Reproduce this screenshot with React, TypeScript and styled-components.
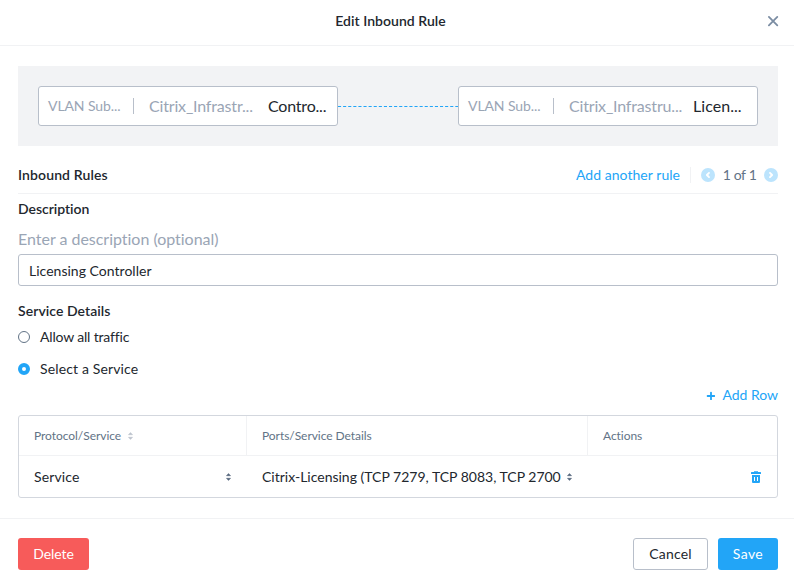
import React from "react";
import styled, { createGlobalStyle } from "styled-components";

const GlobalStyle = createGlobalStyle`
  *, *::before, *::after { box-sizing: border-box; }
  body {
    margin: 0;
    background: #fff;
    font-family: Lato, "Open Sans", sans-serif;
    font-size: 14px;
    color: #22272e;
  }
`;

const Modal = styled.div`
  height: 587px;
  display: flex;
  flex-direction: column;
  background: #fff;
  overflow: hidden;
`;

const Header = styled.header`
  height: 46px;
  flex: none;
  padding: 0 15px 3px 18px;
  display: grid;
  grid-template-columns: 1fr auto 1fr;
  align-items: center;
  border-bottom: 1px solid #f1f2f4;
`;

const Title = styled.h1`
  grid-column: 2;
  margin: 0 6px 0 -10px;
  font-size: 14px;
  line-height: 20px;
  font-weight: 600;
  letter-spacing: 0.04px;
`;

const IconButton = styled.button`
  display: flex;
  padding: 0;
  border: 0;
  background: none;
`;

const CloseButton = styled(IconButton)`
  grid-column: 3;
  justify-self: end;
`;

const Body = styled.main`
  flex: 1;
  padding: 20px 16px 0 18px;
`;

const Diagram = styled.section`
  height: 80px;
  padding: 0 20px;
  display: flex;
  align-items: center;
  background: #f2f3f5;
`;

const Connector = styled.svg`
  flex: 1;
  min-width: 0;
  height: 2px;
  display: block;
`;

const Node = styled.div`
  width: 300px;
  height: 40px;
  flex: none;
  display: flex;
  align-items: center;
  padding: 0 9px;
  background: #fff;
  border: 1px solid #b8bfca;
  border-radius: 3px;
  white-space: nowrap;
`;

const NodeKind = styled.span`
  width: 85px;
  font-size: 14px;
  letter-spacing: -0.1px;
  line-height: 18px;
  color: #9aa5b5;
`;

const NodeRule = styled.span`
  width: 1px;
  height: 16px;
  background: #b8bfca;
`;

const NodeCategory = styled.span<{ $width: number }>`
  width: ${(p) => p.$width}px;
  margin-left: 15px;
  padding-bottom: 1px;
  font-size: 16px;
  line-height: 22px;
  letter-spacing: -0.17px;
  color: #9aa5b5;
`;

const NodeName = styled.span<{ $tracking: number }>`
  padding-bottom: 1px;
  font-size: 16px;
  line-height: 22px;
  letter-spacing: ${(p) => p.$tracking}px;
`;

const RulesBar = styled.div`
  height: 48px;
  padding-top: 11px;
  display: flex;
  align-items: center;
  border-bottom: 1px solid #f1f2f4;
`;

const Heading = styled.h2`
  margin: 0;
  font-size: 14px;
  line-height: 20px;
  font-weight: 600;
  letter-spacing: 0.12px;
`;

const Pager = styled.div`
  margin-left: auto;
  display: flex;
  align-items: center;
`;

const TextLink = styled.a<{ $tracking?: number }>`
  color: #22a5f7;
  line-height: 20px;
  letter-spacing: ${(p) => p.$tracking ?? 0}px;
`;

const PagerRule = styled.span`
  width: 1px;
  height: 16px;
  margin: 0 10px;
  background: #f1f2f4;
`;

const PagerCount = styled.span`
  width: 49px;
  text-align: center;
  line-height: 20px;
  letter-spacing: -0.5px;
  word-spacing: 0.4px;
  color: #627386;
`;

const SectionTitle = styled(Heading)<{ $top: number; $tracking?: number }>`
  margin-top: ${(p) => p.$top}px;
  letter-spacing: ${(p) => p.$tracking ?? 0}px;
`;

const FieldLabel = styled.label`
  display: block;
  margin-top: 9px;
  height: 26px;
  font-size: 16px;
  line-height: 22px;
  letter-spacing: -0.02px;
  color: #9aa5b5;
`;

const TextField = styled.input`
  display: block;
  width: 100%;
  height: 32px;
  padding: 0 10px;
  border: 1px solid #b8bfca;
  border-radius: 3px;
  font: inherit;
  letter-spacing: 0.02px;
  color: inherit;
  outline: 0;
`;

const RadioRow = styled.div<{ $top: number }>`
  margin-top: ${(p) => p.$top}px;
  height: 20px;
  display: flex;
  align-items: center;
  gap: 10px;
`;

const Radio = styled.span<{ $on?: boolean }>`
  width: 12px;
  height: 12px;
  border-radius: 50%;
  background: #fff;
  border: ${(p) => (p.$on ? "4px solid #22a5f7" : "1px solid #627386")};
`;

const RadioLabel = styled.span<{ $tracking: number }>`
  padding-bottom: 1px;
  line-height: 18px;
  letter-spacing: ${(p) => p.$tracking}px;
`;

const AddRow = styled.div`
  margin-top: 6px;
  height: 20px;
  display: flex;
  align-items: center;
  justify-content: flex-end;
  gap: 8px;
`;

const Table = styled.div`
  margin-top: 10px;
  height: 83px;
  border: 1px solid #d3d7de;
  border-radius: 3px;
`;

const TableRow = styled.div<{ $head?: boolean }>`
  height: ${(p) => (p.$head ? 40 : 41)}px;
  display: grid;
  grid-template-columns: 228px 341px 1fr;
  font-size: ${(p) => (p.$head ? 12 : 14)}px;
  letter-spacing: ${(p) => (p.$head ? -0.05 : 0)}px;
  color: ${(p) => (p.$head ? "#627386" : "inherit")};
  border-bottom: ${(p) => (p.$head ? "1px solid #f1f2f4" : "0")};
`;

const HeadCell = styled.div`
  display: flex;
  align-items: center;
  gap: 7px;
  padding: 0 15px;

  & + & {
    border-left: 1px solid #f1f2f4;
    margin-left: -1px;
  }
`;

const Cell = styled.div`
  display: flex;
  align-items: center;
  justify-content: space-between;
  padding: 0 16px 0 15px;
  white-space: nowrap;
`;

const Actions = styled(Cell)`
  justify-content: flex-end;
  padding-top: 1px;
`;

const ServiceName = styled.span`
  letter-spacing: 0.15px;
`;

const Footer = styled.footer`
  height: 69px;
  flex: none;
  padding: 19px 16px 0 18px;
  display: flex;
  align-items: flex-start;
  gap: 10px;
  border-top: 1px solid #f1f2f4;
`;

const Button = styled.button<{ $tone: "danger" | "plain" | "primary"; $width: number; $tracking: number }>`
  width: ${(p) => p.$width}px;
  height: 32px;
  padding: 0 0 1px;
  border-radius: 3px;
  border: ${(p) => (p.$tone === "plain" ? "1px solid #b8bfca" : "0")};
  background: ${(p) => ({ danger: "#f75b5a", plain: "#fff", primary: "#22a5f7" })[p.$tone]};
  color: ${(p) => (p.$tone === "plain" ? "#22272e" : "#fff")};
  font: inherit;
  letter-spacing: ${(p) => p.$tracking}px;
`;

const Spacer = styled.span`
  flex: 1;
`;

function CloseIcon() {
  return (
    <svg width="12" height="12" viewBox="0 0 12 12" fill="none" stroke="#7b8da3" strokeWidth="1.8" strokeLinecap="round">
      <path d="M1.9 1.9l8.4 8.4M10.3 1.9L1.9 10.3" />
    </svg>
  );
}

function PagerIcon({ next }: { next?: boolean }) {
  return (
    <svg width="14" height="14" viewBox="0 0 14 14" fill="none">
      <circle cx="7" cy="7" r="7" fill="#bce4fd" />
      <path d={next ? "M6 4.9L8.1 7L6 9.1" : "M8 4.9L5.9 7L8 9.1"} stroke="#fff" strokeWidth="1.9" strokeLinecap="round" strokeLinejoin="round" />
    </svg>
  );
}

function SortIcon({ color }: { color: string }) {
  return (
    <svg width="5" height="8" viewBox="0 0 5 8" fill={color} stroke={color} strokeWidth="0.6" strokeLinejoin="round">
      <path d="M2.5 0.6L4.5 2.7H0.5zM2.5 7.4L4.5 5.3H0.5z" />
    </svg>
  );
}

function PlusIcon() {
  return (
    <svg width="9" height="9" viewBox="0 0 9 9" stroke="#22a5f7" strokeWidth="1.8" strokeLinecap="round">
      <path d="M5 1.6v6.8M1.6 5h6.8" />
    </svg>
  );
}

function TrashIcon() {
  return (
    <svg width="10" height="12" viewBox="0 0 10 12" fill="#22a5f7">
      <path d="M3 0.2h4v0.8h2.6q0.4 0 0.4 0.4V3H0V1.4q0-0.4 0.4-0.4H3z" />
      <path fillRule="evenodd" d="M1 4h8v7q0 1-1 1H2q-1 0-1-1zM3 6v4h1v-4zM6 6v4h1v-4z" />
    </svg>
  );
}

interface EndpointProps {
  category: string;
  categoryWidth: number;
  name: string;
  tracking: number;
}

function Endpoint({ category, categoryWidth, name, tracking }: EndpointProps) {
  return (
    <Node>
      <NodeKind>VLAN Sub...</NodeKind>
      <NodeRule />
      <NodeCategory $width={categoryWidth}>{category}</NodeCategory>
      <NodeName $tracking={tracking}>{name}</NodeName>
    </Node>
  );
}

export default function App() {
  return (
    <>
      <GlobalStyle />
      <Modal>
        <Header>
          <Title>Edit Inbound Rule</Title>
          <CloseButton aria-label="Close">
            <CloseIcon />
          </CloseButton>
        </Header>
        <Body>
          <Diagram>
            <Endpoint category="Citrix_Infrastr..." categoryWidth={119} name="Contro..." tracking={-0.2} />
            <Connector>
              <line x1="0" y1="1.5" x2="120" y2="1.5" stroke="#22a5f7" strokeDasharray="3.1 2" />
            </Connector>
            <Endpoint category="Citrix_Infrastru..." categoryWidth={124} name="Licen..." tracking={0.05} />
          </Diagram>
          <RulesBar>
            <Heading>Inbound Rules</Heading>
            <Pager>
              <TextLink $tracking={0.04}>Add another rule</TextLink>
              <PagerRule />
              <IconButton aria-label="Previous rule">
                <PagerIcon />
              </IconButton>
              <PagerCount>1 of 1</PagerCount>
              <IconButton aria-label="Next rule">
                <PagerIcon next />
              </IconButton>
            </Pager>
          </RulesBar>
          <SectionTitle $top={5} $tracking={-0.04}>Description</SectionTitle>
          <FieldLabel htmlFor="description">Enter a description (optional)</FieldLabel>
          <TextField id="description" defaultValue="Licensing Controller" />
          <SectionTitle $top={15} $tracking={0.06}>Service Details</SectionTitle>
          <RadioRow $top={6}>
            <Radio />
            <RadioLabel $tracking={-0.17}>Allow all traffic</RadioLabel>
          </RadioRow>
          <RadioRow $top={12}>
            <Radio $on />
            <RadioLabel $tracking={0.14}>Select a Service</RadioLabel>
          </RadioRow>
          <AddRow>
            <PlusIcon />
            <TextLink $tracking={-0.04}>Add Row</TextLink>
          </AddRow>
          <Table>
            <TableRow $head>
              <HeadCell>
                Protocol/Service
                <SortIcon color="#bcc3cd" />
              </HeadCell>
              <HeadCell>Ports/Service Details</HeadCell>
              <HeadCell>Actions</HeadCell>
            </TableRow>
            <TableRow>
              <Cell>
                <ServiceName>Service</ServiceName>
                <SortIcon color="#56677c" />
              </Cell>
              <Cell>
                Citrix-Licensing (TCP 7279, TCP 8083, TCP 2700
                <SortIcon color="#56677c" />
              </Cell>
              <Actions>
                <IconButton aria-label="Delete row">
                  <TrashIcon />
                </IconButton>
              </Actions>
            </TableRow>
          </Table>
        </Body>
        <Footer>
          <Button $tone="danger" $width={71} $tracking={-0.1}>Delete</Button>
          <Spacer />
          <Button $tone="plain" $width={75} $tracking={0.22}>Cancel</Button>
          <Button $tone="primary" $width={60} $tracking={0.4}>Save</Button>
        </Footer>
      </Modal>
    </>
  );
}
